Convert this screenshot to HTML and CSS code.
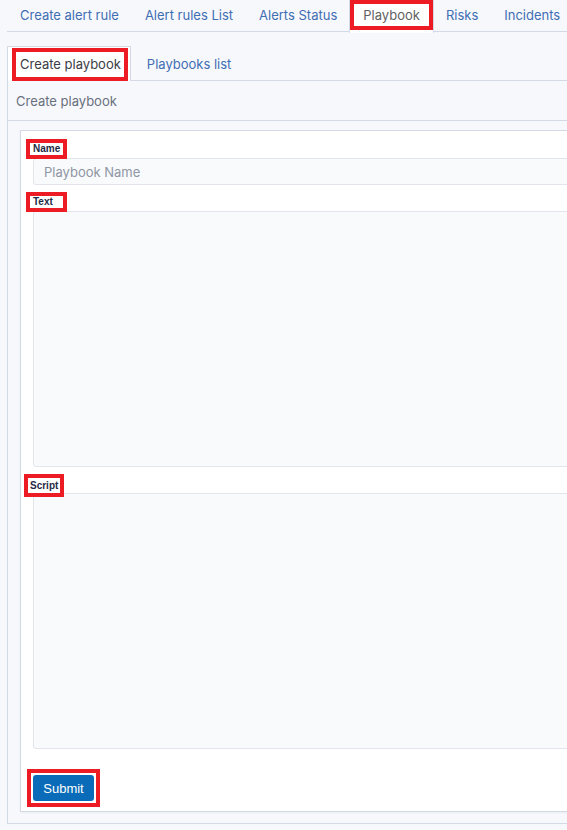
FILE: index.html
```html
<!DOCTYPE html>
<html>
<head>
<meta charset="utf-8">
<link rel="stylesheet" href="styles.css">
</head>
<body>
<div class="page">
  <nav class="topnav">
    <a class="tab">Create alert rule</a>
    <a class="tab">Alert rules List</a>
    <a class="tab">Alerts Status</a>
    <a class="tab tab-active"><span class="mark"></span>Playbook</a>
    <a class="tab">Risks</a>
    <a class="tab">Incidents</a>
  </nav>
  <div class="panel">
    <div class="subnav">
      <a class="subtab subtab-active"><span class="mark mark-sub"></span>Create playbook</a>
      <a class="subtab">Playbooks list</a>
    </div>
    <div class="panel-head">Create playbook</div>
    <div class="panel-body">
      <form class="card">
        <div class="field">
          <span class="label">Name</span>
          <input class="input" type="text" placeholder="Playbook Name">
        </div>
        <div class="field field-text">
          <span class="label">Text</span>
          <textarea class="area"></textarea>
        </div>
        <div class="field field-script">
          <span class="label label-script">Script</span>
          <textarea class="area"></textarea>
        </div>
        <div class="actions">
          <span class="btn-wrap"><button class="btn" type="button">Submit</button></span>
        </div>
      </form>
    </div>
  </div>
</div>
</body>
</html>
```
FILE: styles.css
```css
html, body {
  margin: 0;
  padding: 0;
  background: #f7f8fc;
  overflow: hidden;
}
body {
  font-family: Inter, "Noto Sans", sans-serif;
  font-size: 13px;
  color: #343741;
}
.page {
  width: 640px;
}
.topnav {
  display: flex;
  margin-left: 7px;
  height: 32px;
  border-bottom: 1px solid #d3dae6;
  box-sizing: border-box;
}
.tab {
  display: flex;
  align-items: center;
  padding: 0 13px 3px;
  color: #3f6eb3;
  position: relative;
  white-space: nowrap;
  height: 32px;
  box-sizing: border-box;
}
.tab-active {
  background: #fff;
  color: #5f5f5f;
  border-left: 1px solid #d3dae6;
  border-right: 1px solid #d3dae6;
  height: 33px;
  margin: 0 -1px;
}
.mark {
  position: absolute;
  left: 0;
  top: 0;
  right: 0;
  height: 30px;
  border: 4px solid #ed1c24;
  box-sizing: border-box;
}
.panel {
  margin: 14px 0 0 7px;
  border-left: 1px solid #d3dae6;
  border-bottom: 1px solid #d3dae6;
  padding-bottom: 11px;
}
.subnav {
  display: flex;
  height: 34px;
  border-bottom: 1px solid #d3dae6;
}
.subtab {
  display: flex;
  align-items: center;
  padding: 1px 13px 0;
  color: #3f6eb3;
  position: relative;
  white-space: nowrap;
}
.subtab-active {
  background: #fff;
  color: #3a3d45;
  border-top: 1px solid #d3dae6;
  border-right: 1px solid #d3dae6;
  margin-left: -1px;
  border-left: 1px solid #d3dae6;
  height: 35px;
  box-sizing: border-box;
  padding: 0 9px 0 12px;
  margin-right: 3px;
}
.mark-sub {
  left: 4px;
  right: 2px;
  top: 1px;
  height: 33px;
}
.panel-head {
  height: 39px;
  display: flex;
  align-items: center;
  padding-left: 8px;
  color: #69707d;
  border-bottom: 1px solid #d3dae6;
}
.panel-body {
  padding: 9px 0 0 12px;
}
.card {
  margin: 0;
  background: #fff;
  border: 1px solid #d3dae6;
  border-right: none;
  box-shadow: 0 1px 2px rgba(0,0,0,0.05);
  padding: 8px 0 0 5px;
  height: 682px;
  box-sizing: border-box;
}
.field {
  display: flex;
  flex-direction: column;
  align-items: flex-start;
}
.label {
  display: inline-block;
  border: 4px solid #ed1c24;
  background: #fff;
  font-family: "Liberation Sans", Arial, sans-serif;
  font-size: 10px;
  font-weight: bold;
  color: #1f2a44;
  line-height: 10px;
  padding: 1px 3px 1px 3px;
  width: 27px;
  position: relative;
  z-index: 1;
  margin-bottom: -1px;
}
.label-script {
  margin-left: -2px;
  padding: 3px 2px 0 2px;
  width: 28px;
  height: 12px;
  margin-bottom: -4px;
}
.input, .area {
  margin-left: 7px;
  width: 560px;
  border: 1px solid #e2e5ec;
  background: #f9fafc;
  border-radius: 3px;
  box-sizing: border-box;
  font-family: Inter, "Noto Sans", sans-serif;
  font-size: 13px;
  color: #343741;
  outline: none;
}
.input {
  height: 27px;
  padding: 0 10px;
}
.input::placeholder {
  color: #8f96a3;
}
.area {
  resize: none;
  display: block;
  margin-top: 0;
}
.field-text {
  margin-top: 7px;
}
.field-text .area {
  height: 256px;
}
.field-script {
  margin-top: 7px;
}
.field-script .area {
  height: 256px;
}
.actions {
  margin-top: 20px;
}
.btn-wrap {
  display: inline-block;
  border: 4px solid #ed1c24;
  padding: 2px;
  margin-left: 1px;
  background: #fff;
}
.btn {
  display: block;
  width: 61px;
  height: 26px;
  border: none;
  border-radius: 3px;
  background: #0a6cb8;
  color: #fff;
  font-family: "Liberation Sans", Arial, sans-serif;
  font-size: 13px;
  padding: 0;
}
```
